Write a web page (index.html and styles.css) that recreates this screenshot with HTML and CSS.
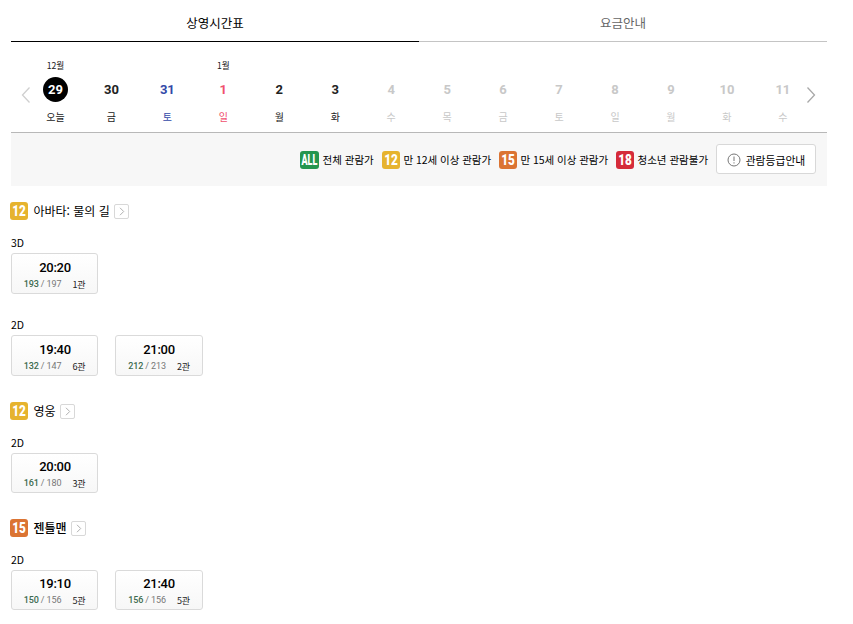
FILE: index.html
```html
<!DOCTYPE html>
<html lang="ko">
<head>
<meta charset="utf-8">
<title>상영시간표</title>
<link rel="stylesheet" href="styles.css">
</head>
<body>
<svg class="defs" width="0" height="0">
  <symbol id="chev" viewBox="0 0 13 13"><path d="M5 2.8l3.7 3.7L5 10.2" fill="none" stroke="#b0b0b0"/></symbol>
</svg>
<main class="page">
  <nav class="tabs">
    <a class="tab active">상영시간표</a>
    <a class="tab">요금안내</a>
  </nav>
  <section class="calendar">
    <svg class="arrow prev" viewBox="0 0 10 18"><path d="M8.5 1.5L1.5 9l7 7.5"/></svg>
    <ol class="days">
      <li class="day today"><span class="month">12월</span><b>29</b><span class="wd">오늘</span></li>
      <li class="day"><span class="month"></span><b>30</b><span class="wd">금</span></li>
      <li class="day sat"><span class="month"></span><b>31</b><span class="wd">토</span></li>
      <li class="day sun"><span class="month">1월</span><b>1</b><span class="wd">일</span></li>
      <li class="day"><span class="month"></span><b>2</b><span class="wd">월</span></li>
      <li class="day"><span class="month"></span><b>3</b><span class="wd">화</span></li>
      <li class="day off"><span class="month"></span><b>4</b><span class="wd">수</span></li>
      <li class="day off"><span class="month"></span><b>5</b><span class="wd">목</span></li>
      <li class="day off"><span class="month"></span><b>6</b><span class="wd">금</span></li>
      <li class="day off"><span class="month"></span><b>7</b><span class="wd">토</span></li>
      <li class="day off"><span class="month"></span><b>8</b><span class="wd">일</span></li>
      <li class="day off"><span class="month"></span><b>9</b><span class="wd">월</span></li>
      <li class="day off"><span class="month"></span><b>10</b><span class="wd">화</span></li>
      <li class="day off"><span class="month"></span><b>11</b><span class="wd">수</span></li>
    </ol>
    <svg class="arrow next" viewBox="0 0 10 18"><path d="M1.5 1.5L8.5 9l-7 7.5"/></svg>
  </section>
  <section class="legend">
    <span class="badge all"><i>ALL</i></span>
    <span class="label l1">전체 관람가</span>
    <span class="badge r12"><i>12</i></span>
    <span class="label l2">만 12세 이상 관람가</span>
    <span class="badge r15"><i>15</i></span>
    <span class="label l2">만 15세 이상 관람가</span>
    <span class="badge r18"><i>18</i></span>
    <span class="label l3">청소년 관람불가</span>
    <button class="guide"><svg viewBox="0 0 14 14"><circle cx="7" cy="7" r="6"/><path d="M7 3.5v4.5M7 9.3v1.2"/></svg>관람등급안내</button>
  </section>

  <article class="movie first">
    <h2><span class="badge r12"><i>12</i></span><span class="title">아바타: 물의 길</span><svg class="go"><use href="#chev"/></svg></h2>
    <div class="format">
      <h3>3D</h3>
      <div class="shows">
        <a class="show"><strong>20:20</strong><span class="info"><span><em>193</em> / 197</span><span class="hall">1관</span></span></a>
      </div>
    </div>
    <div class="format second">
      <h3>2D</h3>
      <div class="shows">
        <a class="show"><strong>19:40</strong><span class="info"><span><em>132</em> / 147</span><span class="hall">6관</span></span></a>
        <a class="show wide"><strong>21:00</strong><span class="info"><span><em>212</em> / 213</span><span class="hall">2관</span></span></a>
      </div>
    </div>
  </article>
  <article class="movie">
    <h2><span class="badge r12"><i>12</i></span><span class="title">영웅</span><svg class="go"><use href="#chev"/></svg></h2>
    <div class="format short">
      <h3>2D</h3>
      <div class="shows">
        <a class="show"><strong>20:00</strong><span class="info"><span><em>161</em> / 180</span><span class="hall">3관</span></span></a>
      </div>
    </div>
  </article>
  <article class="movie">
    <h2><span class="badge r15"><i>15</i></span><span class="title medium">젠틀맨</span><svg class="go"><use href="#chev"/></svg></h2>
    <div class="format short">
      <h3>2D</h3>
      <div class="shows">
        <a class="show"><strong>19:10</strong><span class="info"><span><em>150</em> / 156</span><span class="hall">5관</span></span></a>
        <a class="show wide"><strong>21:40</strong><span class="info"><span><em>156</em> / 156</span><span class="hall">5관</span></span></a>
      </div>
    </div>
  </article>
</main>
</body>
</html>
```
FILE: styles.css
```css
* { box-sizing: border-box; }
body { margin: 0; background: #fff; color: #000; font-family: "Noto Sans CJK KR", sans-serif; overflow: hidden; }
.defs { display: block; }
.page { width: 816px; margin-left: 11px; }

.tabs { display: flex; height: 42px; }
.tab { flex: 1; border-bottom: 1px solid #c4c4c4; font-size: 12.5px; line-height: 46px; text-align: center; color: #666; height: 42px; }
.tab.active { border-color: #000; color: #000; }

.calendar { display: flex; height: 91px; border-bottom: 1px solid #b8b8b8; }
.arrow { width: 10px; height: 18px; margin-top: 44px; flex: none; fill: none; stroke-width: 1.3; }
.prev { margin-left: 10px; stroke: #cfcfcf; }
.next { stroke: #a8a8a8; margin-left: -5px; }
.days { display: flex; list-style: none; margin: 0 0 0 -3.5px; padding: 0; }
.day { width: 55.96px; display: flex; flex-direction: column; align-items: center; color: #222; flex: none; }
.month { height: 35px; padding-top: 18px; font-size: 8.7px; line-height: 12px; color: #222; }
.day b { width: 25px; height: 25px; border-radius: 50%; font: bold 13px/25px Roboto, sans-serif; text-align: center; }
.wd { margin-top: 7px; font-size: 10px; line-height: 16px; }
.today b { background: #000; color: #fff; }
.sat { color: #3349a8; }
.sun { color: #f0506e; }
.off { color: #c8c8c8; }

.legend { display: flex; align-items: center; height: 53px; padding-left: 289px; background: #f7f7f7; }
.badge { display: flex; align-items: center; justify-content: center; width: 18px; height: 18px; border-radius: 3px; flex: none; }
.badge i { font: 900 15.5px/18px Roboto, sans-serif; color: #fff; transform: scaleX(.76); }
.all { width: 19px; background: #24964f; }
.all i { font-size: 14px; transform: scaleX(.64); }
.r12 { background: #e6b32e; }
.r15 { background: #db7433; }
.r18 { background: #d52b3a; }
.label { font-size: 10.5px; line-height: 16px; white-space: nowrap; padding-left: 3.5px; flex: none; }
.l1 { width: 63px; }
.l2 { width: 99px; letter-spacing: -0.05px; }
.l3 { width: 82px; }
.guide { width: 100px; height: 30px; flex: none; display: flex; align-items: center; justify-content: center; gap: 5px; margin: 0 0 1px; padding: 1px 0 0; background: #fff; border: 1px solid #d8d8d8; border-radius: 3px; font: 10.8px/16px "Noto Sans CJK KR", sans-serif; color: #000; white-space: nowrap; }
.guide svg { width: 14px; height: 14px; fill: none; stroke: #777; }

.movie { margin-bottom: 26px; }
.first { margin-top: 16px; }
h2 { display: flex; align-items: center; height: 18px; margin: 0 0 0 -1px; font-size: 12px; font-weight: 400; line-height: 18px; }
.title { margin: 0 4.5px 0 5.5px; }
.medium { font-weight: 500; }
.go { width: 15px; height: 15px; border: 1px solid #d8d8d8; border-radius: 2px; }
h3 { margin: 0; font-size: 10.5px; line-height: 16px; font-weight: 400; height: 18px; }
.format { padding-top: 15px; }
.second { padding-top: 23px; }
.shows { display: flex; gap: 17px; }
.show { width: 87px; height: 41px; border: 1px solid #dadada; border-radius: 3px; background: linear-gradient(#fff, #f7f7f7); display: flex; flex-direction: column; align-items: center; padding-top: 6px; }
.wide { width: 88px; }
.short .show { height: 40px; padding-top: 5px; }
.show strong { font: 500 13px/16px Roboto, sans-serif; letter-spacing: -0.3px; padding-left: 1px; }
.wide strong { padding-left: 0; }
.info { display: flex; gap: 11px; margin-top: 1px; font: 9px/15px Roboto, sans-serif; letter-spacing: -0.12px; color: #777; white-space: nowrap; }
.info em { font-style: normal; font-weight: 500; color: #3d6b50; }
.hall { font-family: "Noto Sans CJK KR", sans-serif; color: #222; letter-spacing: -0.2px; }
```
